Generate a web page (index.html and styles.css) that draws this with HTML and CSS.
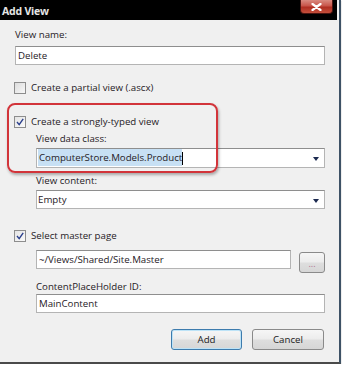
FILE: index.html
```html
<!DOCTYPE html>
<html>
<head>
	<title>Add View</title>
	<link rel="stylesheet" href="styles.css">
</head>
<body>
	<div class="window">
		<div class="titlebar">
			<span class="title">Add View</span>
			<span class="close">
				<svg width="11" height="8" viewBox="0 0 11 8"><path d="M1.5 1 L9.5 7 M9.5 1 L1.5 7" stroke="#fff" stroke-width="2.2" stroke-linecap="round"/></svg>
			</span>
		</div>

		<div class="content">
			<div class="label first">View name:</div>
			<div class="field full">Delete</div>

			<div class="check-row partial">
				<span class="checkbox"></span>
				<span>Create a partial view (.ascx)</span>
			</div>

			<div class="check-row typed">
				<span class="checkbox checked">
					<svg width="10" height="10" viewBox="0 0 10 10"><path d="M2 5 L4.2 7.6 L8.2 1.8" fill="none" stroke="#2a3f8c" stroke-width="1.4"/></svg>
				</span>
				<span>Create a strongly-typed view</span>
			</div>

			<div class="indent">
				<div class="label gap-s">View data class:</div>
				<div class="field combo tall"><span class="selected">ComputerStore.Models.Product</span><span class="caret"></span><span class="arrow"></span></div>

				<div class="label gap-m">View content:</div>
				<div class="field combo">Empty<span class="arrow"></span></div>
			</div>

			<div class="check-row master">
				<span class="checkbox checked">
					<svg width="10" height="10" viewBox="0 0 10 10"><path d="M2 5 L4.2 7.6 L8.2 1.8" fill="none" stroke="#2a3f8c" stroke-width="1.4"/></svg>
				</span>
				<span>Select master page</span>
			</div>

			<div class="indent">
				<div class="master-row">
					<div class="field grow">~/Views/Shared/Site.Master</div>
					<div class="button browse">...</div>
				</div>
				<div class="label gap-l">ContentPlaceHolder ID:</div>
				<div class="field">MainContent</div>
			</div>

			<div class="actions">
				<div class="button default">Add</div>
				<div class="button cancel">Cancel</div>
			</div>
		</div>

		<div class="highlight"></div>
	</div>
</body>
</html>
```

FILE: styles.css
```css
body {
	margin: 0;
	background-color: #fff;
	font-family: "Open Sans", "Noto Sans", sans-serif;
	font-size: 9.7px;
	color: #262026;
}

.window {
	position: relative;
	width: 339px;
	background-color: #f0f0f0;
	border-right: 2px solid #3e5266;
	border-bottom: 2px solid #4a4a4a;
	box-shadow: 0 1px 1px #9a9a9a;
}

/* barra de titulo */
.titlebar {
	display: flex;
	justify-content: space-between;
	align-items: flex-start;
	height: 20px;
	background-color: #000;
	margin-right: 2px;
}

.title {
	font-weight: bold;
	font-size: 10.5px;
	color: #e6e6e6;
	padding: 4px 0 0 2px;
	letter-spacing: -0.2px;
}

.close {
	display: flex;
	align-items: center;
	justify-content: center;
	width: 31px;
	height: 13px;
	margin-right: 4px;
	border: 1px solid #4a1410;
	border-top: none;
	border-radius: 0 0 4px 4px;
	background: linear-gradient(#d98a80 0%, #c8554a 45%, #b02e22 55%, #c4503c 100%);
}

.content {
	padding: 8px 14px 12px 15px;
}

.label {
	line-height: 13px;
	white-space: nowrap;
}

.first { margin-bottom: 5px; }
.gap-s { margin-top: 4px; margin-bottom: 3px; }
.gap-m { margin-top: 6px; margin-bottom: 3px; }
.gap-l { margin-top: 7px; margin-bottom: 1px; }

.field {
	position: relative;
	box-sizing: border-box;
	height: 19px;
	line-height: 17px;
	padding-left: 2px;
	background-color: #fff;
	border: 1px solid #b4b4b4;
	border-top-color: #8e8e8e;
	white-space: nowrap;
}

.field.tall { height: 20px; line-height: 18px; }

.combo { padding-left: 1px; }

.selected {
	background-color: #c7e0f4;
	padding: 2px 0 2px 1px;
}

.caret {
	display: inline-block;
	width: 1px;
	height: 13px;
	background-color: #000;
	vertical-align: middle;
}

.arrow {
	position: absolute;
	right: 5px;
	top: 8px;
	border-left: 3.5px solid transparent;
	border-right: 3.5px solid transparent;
	border-top: 4px solid #1c2a50;
}

.check-row {
	display: flex;
	align-items: center;
	height: 13px;
	white-space: nowrap;
}

.partial { margin-top: 16px; }
.typed { margin-top: 21px; }
.master { margin-top: 20px; }

.checkbox {
	display: flex;
	align-items: center;
	justify-content: center;
	box-sizing: border-box;
	width: 12px;
	height: 12px;
	margin: 0 5px 0 -1px;
	border: 1px solid #8d8d8d;
	background: linear-gradient(135deg, #dcdcdc, #f8f8f8);
}

.checkbox.checked {
	background: linear-gradient(135deg, #e4e4e4, #fafafa);
}

.indent {
	padding-left: 21px;
}

.master-row {
	display: flex;
	align-items: flex-start;
	margin-top: 8px;
	height: 23px;
}

.grow {
	flex: 1;
	margin-right: 8px;
}

.button {
	box-sizing: border-box;
	display: flex;
	align-items: center;
	justify-content: center;
	border: 1px solid #8a8a8a;
	border-radius: 3px;
	background: linear-gradient(#f6f6f6 0%, #ececec 48%, #dedede 52%, #d6d6d6 100%);
	color: #222;
}

.browse {
	width: 26px;
	height: 21px;
	margin-top: 2px;
	color: #b07090;
	font-size: 9px;
	line-height: 9px;
	padding-top: 2px;
}

.actions {
	display: flex;
	justify-content: flex-end;
	gap: 10px;
	margin-top: 16px;
	padding-right: 1px;
}

.actions .button {
	height: 21px;
	width: 72px;
}

.button.default {
	width: 71px;
	border-color: #3d7bad;
	box-shadow: inset 0 0 0 1px #bde3f7;
}

/* marco rojo de anotacion */
.highlight {
	position: absolute;
	left: 7px;
	top: 103px;
	width: 211px;
	height: 70px;
	box-sizing: border-box;
	border: 2px solid #d2343a;
	border-radius: 8px;
	box-shadow: 1px 2px 3px rgba(0,0,0,0.3);
}
```
